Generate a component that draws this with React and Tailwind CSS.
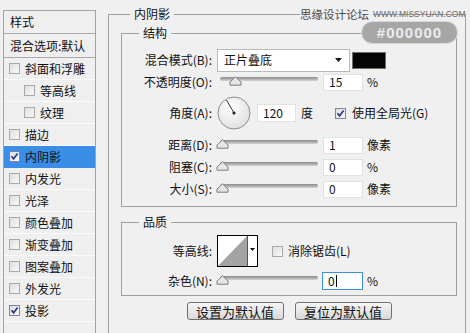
import React from 'react'

const styleList = [
  { label: '斜面和浮雕' },
  { label: '等高线', sub: true },
  { label: '纹理', sub: true },
  { label: '描边' },
  { label: '内阴影', checked: true, active: true },
  { label: '内发光' },
  { label: '光泽' },
  { label: '颜色叠加' },
  { label: '渐变叠加' },
  { label: '图案叠加' },
  { label: '外发光' },
  { label: '投影', checked: true },
]

function Check({ checked }) {
  return (
    <svg width="11" height="11" viewBox="0 0 11 11" className="shrink-0">
      <defs>
        <linearGradient id="cbg" x1="0" y1="0" x2="1" y2="1">
          <stop offset="0" stopColor="#dcdcdc" />
          <stop offset="1" stopColor="#fbfbfb" />
        </linearGradient>
      </defs>
      <rect x="0.5" y="0.5" width="10" height="10" fill="url(#cbg)" stroke={checked ? '#7a869c' : '#a9a9a9'} />
      {checked && <path d="M2.5 5.2 L4.6 7.8 L8.6 2.6" stroke="#2b3a8c" strokeWidth="1.7" fill="none" />}
    </svg>
  )
}

function Slider({ pct = 0 }) {
  return (
    <div className="relative w-[101px] h-[12px] shrink-0">
      <div className="absolute left-[3px] right-0 top-0 h-[4px] rounded-full bg-gradient-to-b from-[#8a8a8a] to-[#d4d4d4]" />
      <svg
        width="13"
        height="10"
        viewBox="0 0 13 10"
        className="absolute top-[-1px]"
        style={{ left: Math.round(pct * 0.85) - 1 }}
      >
        <path d="M6.5 0.8 L12 6 L12 9.2 L1 9.2 L1 6 Z" fill="#e6e6e6" stroke="#7c7c7c" />
      </svg>
    </div>
  )
}

function Field({ value, focus }) {
  return (
    <div
      className={
        focus
          ? 'w-[41px] h-[18px] bg-white border border-[#3c8fe0] flex items-center pl-[5px] shrink-0'
          : 'w-[40px] h-[17px] bg-white border border-[#e2e2e2] flex items-center pl-[5px] shrink-0'
      }
    >
      {value}
      {focus && <span className="ml-[1px] w-[1px] h-[12px] bg-black" />}
    </div>
  )
}

function Row({ label, h, children }) {
  return (
    <div className="flex items-center" style={{ height: h }}>
      <div className="w-[90px] text-right shrink-0">{label}</div>
      {children}
    </div>
  )
}

function SliderRow({ label, pct, value, unit, h }) {
  return (
    <Row label={label} h={h}>
      <div className="ml-[5px] pt-[2px]">
        <Slider pct={pct} />
      </div>
      <div className="ml-[5px]">
        <Field value={value} />
      </div>
      <span className="ml-[4px]">{unit}</span>
    </Row>
  )
}

function Button({ children }) {
  return (
    <div className="w-[97px] h-[18px] rounded-[3px] border border-[#707070] bg-gradient-to-b from-[#f6f6f6] to-[#d9d9d9] flex items-center justify-center text-[13px] leading-none">
      {children}
    </div>
  )
}

export default function App() {
  return (
    <div className="relative w-[470px] h-[333px] overflow-hidden bg-[#f0f0f0] text-[12px] leading-[16px] text-[#111] font-['Noto_Sans_CJK_SC',sans-serif]">
      <div className="flex items-start">
        {/* styles list */}
        <div className="ml-[3px] mt-[10px] w-[93px] h-[330px] border border-[#a3a3a3] border-b-0 bg-[#efefef] shrink-0">
          <div className="h-[23px] border-b border-[#a9a9a9] pl-[6px] flex items-center">样式</div>
          <div className="h-[24px] border-b border-[#a9a9a9] pl-[6px] flex items-center whitespace-nowrap overflow-hidden">混合选项:默认</div>
          {styleList.map((s) => (
            <div
              key={s.label}
              className={
                'h-[22px] border-b flex items-center gap-[5px] ' +
                (s.active ? 'bg-[#3a8ee8] border-[#3a8ee8] ' : 'border-[#fafafa] ') +
                (s.sub ? 'pl-[20px]' : 'pl-[5px]')
              }
            >
              <Check checked={s.checked} />
              <span>{s.label}</span>
            </div>
          ))}
        </div>

        {/* inner shadow panel */}
        <fieldset className="ml-[12px] mt-[6px] w-[358px] h-[340px] border border-[#a0a0a0] pl-[12px] pr-[8px] pt-[3px]">
          <legend className="ml-[9px] px-[4px]">内阴影</legend>

          <fieldset className="border border-[#a0a0a0] pt-[7px] pb-[6px]">
            <legend className="ml-[17px] px-[4px]">结构</legend>

            <Row label="混合模式(B):" h={24}>
              <div className="ml-[5px] w-[133px] h-[23px] bg-white border border-[#b9b9b9] flex items-center pl-[6px] pr-[7px]">
                <span className="flex-1">正片叠底</span>
                <svg width="7" height="4" viewBox="0 0 7 4">
                  <path d="M0 0 L7 0 L3.5 4 Z" fill="#111" />
                </svg>
              </div>
              <div className="ml-[2px] w-[34px] h-[17px] bg-[#050505] border border-[#6f6f6f]" />
            </Row>

            <SliderRow label="不透明度(O):" pct={15} value="15" unit="%" h={20} />

            <Row label="角度(A):" h={42}>
              <svg width="34" height="34" viewBox="0 0 34 34" className="ml-[5px] shrink-0">
                <defs>
                  <radialGradient id="dial" cx="0.4" cy="0.35" r="0.7">
                    <stop offset="0" stopColor="#ffffff" />
                    <stop offset="1" stopColor="#dedede" />
                  </radialGradient>
                </defs>
                <circle cx="17" cy="17" r="16" fill="url(#dial)" stroke="#8e8e8e" />
                <line x1="17" y1="17" x2="9.5" y2="4" stroke="#333" strokeWidth="1" />
                <circle cx="17" cy="17" r="1.6" fill="#222" />
              </svg>
              <div className="ml-[6px]">
                <div className="w-[39px] h-[18px] bg-white border border-[#e2e2e2] flex items-center pl-[5px]">120</div>
              </div>
              <span className="ml-[5px]">度</span>
              <div className="ml-[22px] flex items-center gap-[6px]">
                <Check checked />
                <span>使用全局光(G)</span>
              </div>
            </Row>

            <SliderRow label="距离(D):" pct={0} value="1" unit="像素" h={22} />
            <SliderRow label="阻塞(C):" pct={0} value="0" unit="%" h={22} />
            <SliderRow label="大小(S):" pct={0} value="0" unit="像素" h={22} />
          </fieldset>

          <fieldset className="mt-[7px] border border-[#a0a0a0] pt-[4px] pb-[1px]">
            <legend className="ml-[17px] px-[4px]">品质</legend>

            <Row label="等高线:" h={34}>
              <div className="ml-[5px] w-[41px] h-[32px] border border-black bg-white flex shrink-0">
                <svg width="29" height="30" viewBox="0 0 29 30">
                  <polygon points="0,30 29,0 29,30" fill="#a3a3a3" />
                </svg>
                <div className="flex-1 border-l border-[#555] flex justify-center pt-[12px]">
                  <svg width="5" height="3" viewBox="0 0 5 3">
                    <path d="M0 0 L5 0 L2.5 3 Z" fill="#111" />
                  </svg>
                </div>
              </div>
              <div className="ml-[14px] flex items-center gap-[5px]">
                <Check />
                <span>消除锯齿(L)</span>
              </div>
            </Row>

            <Row label="杂色(N):" h={26}>
              <div className="ml-[5px] pt-[2px]">
                <Slider pct={0} />
              </div>
              <div className="ml-[4px]">
                <Field value="0" focus />
              </div>
              <span className="ml-[4px]">%</span>
            </Row>
          </fieldset>

          <div className="mt-[6px] flex justify-center gap-[11px]">
            <Button>设置为默认值</Button>
            <Button>复位为默认值</Button>
          </div>
        </fieldset>
      </div>

      {/* watermark */}
      <div className="absolute left-[300px] top-[6px] flex items-center whitespace-nowrap">
        <span className="bg-[#f0f0f0] text-[11.5px] text-[#4a4a4a] pr-[4px]">思缘设计论坛</span>
        <span className="text-[8.5px] leading-[10px] text-[#6a6a6a] font-['Liberation_Sans',sans-serif]">WWW.MISSYUAN.COM</span>
      </div>
      <div className="absolute left-[362px] top-[22px] w-[95px] h-[21px] rounded-full bg-[#a6a6a6] ring-1 ring-[#d8d8d8] flex items-center justify-center text-[15px] font-bold tracking-[1px] text-[#ececec] font-['Liberation_Sans',sans-serif]">
        #000000
      </div>
    </div>
  )
}
